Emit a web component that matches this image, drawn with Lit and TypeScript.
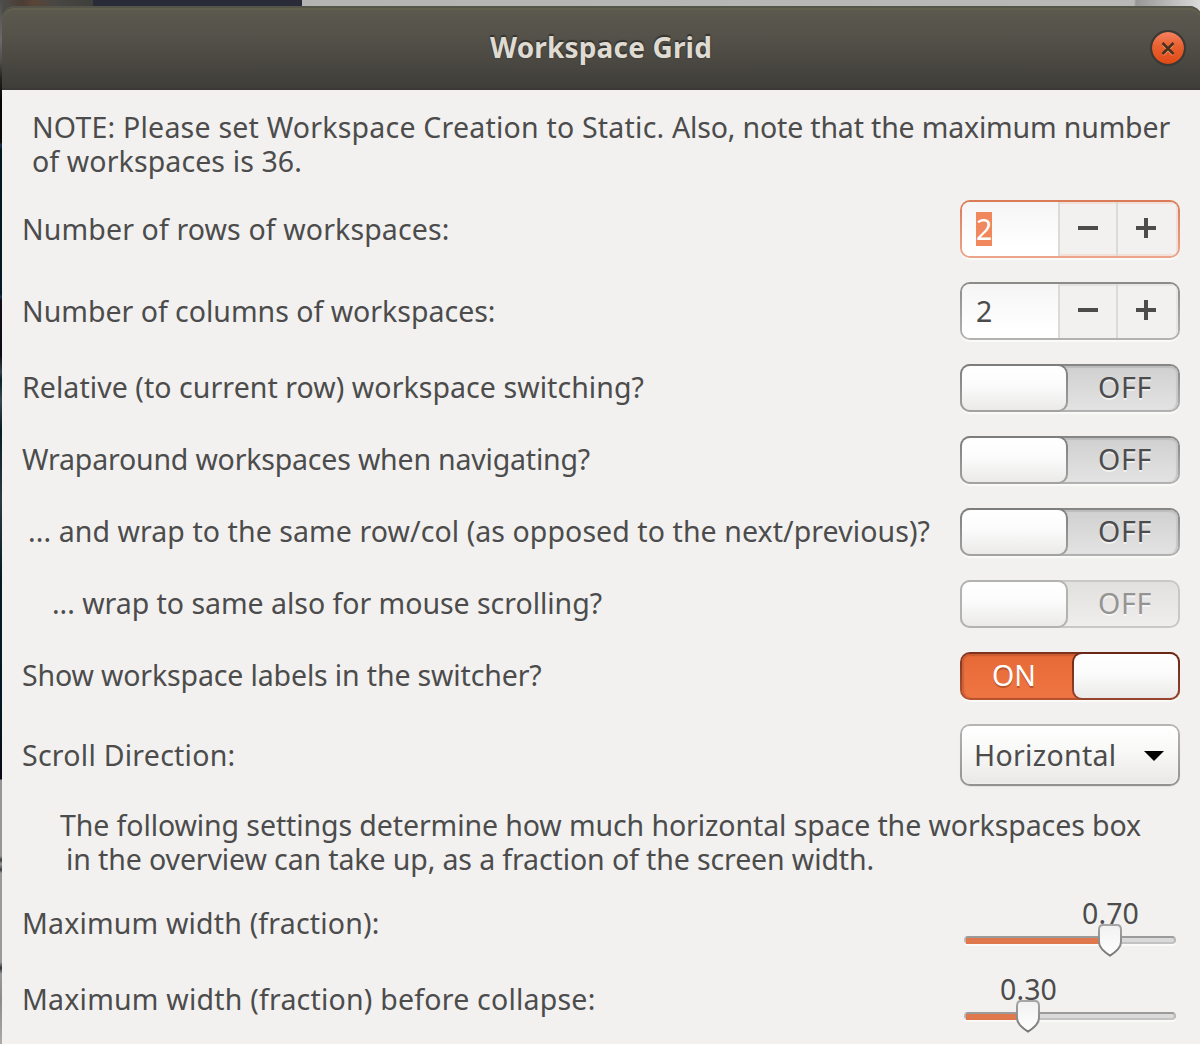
import { LitElement, html, css } from "lit";
import { customElement, property } from "lit/decorators.js";

/** One line of text whose tracking is adjusted so that it spans a given width. */
@customElement("fit-text")
class FitText extends LitElement {
  @property({ type: Number }) span = 0;
  @property() text = "";
  static styles = css`
    :host { display: block; white-space: pre; flex: none; }
    .t { display: inline-block; }
  `;
  render() {
    return html`<span class="t">${this.text}</span>`;
  }
  updated() {
    const el = this.renderRoot.querySelector(".t") as HTMLElement;
    el.style.letterSpacing = "0px";
    const natural = el.getBoundingClientRect().width;
    const n = this.text.length;
    if (this.span && n > 1) el.style.letterSpacing = `${(this.span - natural) / n}px`;
  }
}

@customElement("spin-box")
class SpinBox extends LitElement {
  @property() value = "";
  @property({ type: Boolean }) active = false;
  static styles = css`
    :host { display: block; }
    .frame {
      box-sizing: border-box; width: 220px; height: 58px; padding: 2px;
      border-radius: 10px; background: linear-gradient(#8a8a89, #b3b3b2);
      box-shadow: 0 2px 1px #fafaf9;
    }
    .frame.active { background: linear-gradient(#d97b56, #eca48b); }
    .inner { display: flex; height: 54px; border-radius: 8px; overflow: hidden; background: #f2f1f0; }
    .entry {
      width: 96px; box-sizing: border-box; padding-left: 14px; display: flex; align-items: center;
      background: linear-gradient(#f5f5f5, #fff 85%);
    }
    .val { display: block; width: 16px; height: 34px; line-height: 35px; text-align: center; color: #4c4c4c; font-size: 28.5px; }
    .active .val { background: #f0875d; color: #fff; }
    .btn {
      width: 56px; border-left: 2px solid #dadad9; display: flex; align-items: center; justify-content: center;
      box-shadow: inset 0 2px 0 #e4e3e2;
    }
    .btn:last-child { width: 62px; padding-right: 4px; box-sizing: border-box; box-shadow: inset -2px 2px 0 #e7e6e5; }
    .active .btn { box-shadow: inset 0 2px 0 #f2dfd8, inset 0 -2px 0 #f2dfd8; }
    .active .btn:last-child { box-shadow: inset -2px 2px 0 #f2dfd8, inset 0 -2px 0 #f2dfd8; }
    svg { display: block; margin-bottom: 2px; }
  `;
  render() {
    return html`<div class="frame ${this.active ? "active" : ""}">
      <div class="inner">
        <div class="entry"><span class="val">${this.value}</span></div>
        <div class="btn"><svg width="20" height="20"><path d="M0 8h20v4H0z" fill="#4c4c4c" /></svg></div>
        <div class="btn"><svg width="20" height="20"><path d="M0 8h8V0h4v8h8v4h-8v8H8v-8H0z" fill="#4c4c4c" /></svg></div>
      </div>
    </div>`;
  }
}

@customElement("toggle-switch")
class ToggleSwitch extends LitElement {
  @property({ type: Boolean }) on = false;
  @property({ type: Boolean }) disabled = false;
  static styles = css`
    :host { display: block; }
    .frame {
      box-sizing: border-box; width: 220px; height: 48px; border-radius: 10px; padding: 2px;
      background: linear-gradient(#858585, #b2b2b2); display: flex; position: relative;
      box-shadow: 0 2px 1px #fafaf9;
    }
    .trough {
      flex: 1; border-radius: 8px; background: linear-gradient(#d0d0d0, #e3e3e3);
      box-shadow: inset 0 2px 1px #bcbcbc, inset -2px 0 1px #c8c8c8;
      display: flex; align-items: center; justify-content: flex-end; color: #4c4c4c;
      text-shadow: 0 2px 0 rgba(255, 255, 255, 0.6);
    }
    .label { line-height: 42px; padding: 0 26px 2px 0; }
    .knob {
      position: absolute; left: 0; top: 0; box-sizing: border-box; width: 108px; height: 48px;
      border-radius: 10px; padding: 2px; background: linear-gradient(#7d7d7d, #a2a2a2);
    }
    .face { height: 44px; border-radius: 8px; background: linear-gradient(#fff, #fbfbfb 45%, #ebeae9); }
    .disabled { background: #c9c8c7; box-shadow: none; }
    .disabled .trough { background: linear-gradient(#e1e0df, #efeeed); box-shadow: none; color: #969491; }
    .disabled .knob { background: #b2b2b1; }
    .on { background: linear-gradient(#7d321c, #b8532f); }
    .on .trough {
      background: linear-gradient(#e66a38, #ef7543); box-shadow: inset 0 2px 1px #cc5b31, inset 2px 0 1px #cc6239;
      justify-content: flex-start; color: #fff; text-shadow: 0 2px 0 rgba(130, 50, 20, 0.45);
    }
    .on .label { padding: 0 0 2px 30px; }
    .on .knob { left: auto; right: 0; background: linear-gradient(#692715, #96452e); }
  `;
  render() {
    return html`<div class="frame ${this.on ? "on" : ""} ${this.disabled ? "disabled" : ""}">
      <div class="trough">
        <fit-text class="label" .text=${this.on ? "ON" : "OFF"} .span=${this.on ? 44 : 54}></fit-text>
      </div>
      <div class="knob"><div class="face"></div></div>
    </div>`;
  }
}

@customElement("combo-box")
class ComboBox extends LitElement {
  @property() value = "";
  static styles = css`
    :host { display: block; }
    .frame {
      box-sizing: border-box; width: 220px; height: 62px; border-radius: 10px; padding: 2px;
      background: linear-gradient(#b6b5b4, #929190); box-shadow: 0 1px 1px #e2e1e0;
    }
    .face {
      height: 58px; border-radius: 8px; box-sizing: border-box; padding: 0 14px 0 12px;
      display: flex; align-items: center; justify-content: space-between;
      background: linear-gradient(#fff, #f8f8f7 45%, #e9e8e7); color: #4c4c4c;
      box-shadow: inset 0 0 2px #fff;
    }
    svg { display: block; margin-top: 1px; }
  `;
  render() {
    return html`<div class="frame"><div class="face">
      <fit-text .text=${this.value} .span=${142.5}></fit-text>
      <svg width="20" height="10"><path d="M0 0h20L10 10z" fill="#000" /></svg>
    </div></div>`;
  }
}

@customElement("value-scale")
class ValueScale extends LitElement {
  @property({ type: Number }) value = 0;
  static styles = css`
    :host { display: block; }
    .scale { position: relative; width: 220px; height: 52px; padding: 39px 4px 0; box-sizing: border-box; }
    .trough {
      height: 8px; box-sizing: border-box; border-radius: 4px; border: 2px solid #b7b7b7;
      border-top-color: #9b9b9b; border-bottom-color: #c2c2c2; background: #dadada; box-shadow: 0 2px 0 #fafaf9;
    }
    .fill { height: 6px; background: #e0784e; }
    .over { position: absolute; width: 60px; margin-left: -30px; top: 0; display: flex; flex-direction: column; align-items: center; }
    .num { line-height: 32px; height: 27px; padding-left: 1px; color: #4c4c4c; }
    svg { display: block; }
  `;
  render() {
    const x = 2.5 + 205 * this.value;
    return html`<div class="scale">
      <div class="trough"><div class="fill" style="width:${x - 2}px"></div></div>
      <div class="over" style="left:${x + 4}px">
        <fit-text class="num" .text=${this.value.toFixed(2)} .span=${57}></fit-text>
        <svg width="26" height="33" viewBox="0 0 26 34" preserveAspectRatio="none">
          <defs>
            <linearGradient id="s" x2="0" y2="1"><stop stop-color="#a6a6a6" /><stop offset="1" stop-color="#777" /></linearGradient>
            <linearGradient id="f" x2="0" y2="1"><stop stop-color="#f1f1f1" /><stop offset="1" stop-color="#fff" /></linearGradient>
          </defs>
          <path d="M6 1h14q4 0 4 5v12.500q0 4-3 7.500-3.500 4-8 6.500-4.500-2.500-8-6.500-3-3.500-3-7.500V6q0-5 4-5z" fill="url(#f)" stroke="url(#s)" stroke-width="2" />
        </svg>
      </div>
    </div>`;
  }
}

@customElement("app-root")
class AppRoot extends LitElement {
  static styles = css`
    :host {
      display: block; width: 1200px; height: 1044px; overflow: hidden; box-sizing: border-box;
      padding: 6px 0 0 2px; color: #4c4c4c;
      font: 28.5px/34px "Noto Sans", "Open Sans", sans-serif;
      background:
        linear-gradient(90deg, #4c4c4a 0, #4b3d33 20px, #5a4537 32px, #494743 52px, #3f3f3c 91px, #292c38 91px,
          #292c38 300px, #b4b4b3 300px, #b9b9b8 1132px, #979797 1134px, #dcdcdc 1200px) 2px 0 / 1200px 24px no-repeat,
        linear-gradient(#4c4c4a 0, #6a6a68 40px, #4c4c4a 62px, #24241f 78px, #050503 100px, #0a0a08 142px,
          #1d3455 145px, #02151f 150px, #031b27 294px, #1d3455 297px, #140c18 300px, #0c0a12 355px,
          #35434c 372px, #0a2028 380px, #3a4850 400px, #081c24 430px, #2b3a42 500px, #061a24 580px,
          #021a26 700px, #0a0814 779px, #969696 780px, #969696 856px, #3c4043 860px, #969696 864px, #3c4043 870px,
          #999 873px, #999 962px, #2d3338 968px, #999 974px, #8c8c8c 1000px, #aaa 1044px) 0 0 / 2px 1044px no-repeat,
        #555;
    }
    .window { width: 1200px; }
    header {
      height: 84px; box-sizing: border-box; border-radius: 13px 13px 0 0; padding: 0 16px 0 0;
      background: linear-gradient(#5c594f, #55524a 35%, #3e3d38);
      box-shadow: inset 0 2px 0 #55544a, inset 0 4px 0 #62604f, inset 0 -2px 0 #3b3835;
      display: grid; grid-template-columns: 1fr auto 1fr; align-items: center;
    }
    .title {
      grid-column: 2; font-weight: 700; font-size: 28px; color: #dfdbd2; margin-left: 14px; padding-bottom: 2px;
      text-shadow: 0 -2px 1px #35342f, 0 0 2px #35342f;
    }
    .close {
      justify-self: end; box-sizing: border-box; width: 36px; height: 36px; border-radius: 50%;
      border: 2px solid #3a3935; background: linear-gradient(#f4815f, #e9602f 45%, #df4a16) padding-box;
      display: flex; align-items: center; justify-content: center;
    }
    main {
      box-sizing: border-box; height: 954px; padding: 20px 22px 0 20px; background: #f2f1f0;
      display: flex; flex-direction: column;
    }
    .note { padding-left: 10px; height: 90px; flex: none; }
    .pair { display: flex; }
    .info { padding: 22px 0 21px 38px; flex: none; }
    .info .second { padding-left: 6px; }
    .row { display: flex; align-items: center; justify-content: space-between; flex: none; margin-bottom: 24px; }
    .row.switch > fit-text { padding-bottom: 2px; }
    .row.combo { margin-bottom: 0; }
    .indent { padding-left: 6px; }
    .indent2 { padding-left: 30px; }
  `;
  render() {
    const line = (text: string, span: number, cls = "") =>
      html`<fit-text class=${cls} .text=${text} .span=${span}></fit-text>`;
    return html`<div class="window">
      <header>
        ${line("Workspace Grid", 222, "title")}
        <div class="close">
          <svg width="14" height="16" viewBox="0 0 14 16">
            <path d="M2 5l10 10M12 5L2 15" stroke="#f59a78" stroke-width="2" />
            <path d="M1.500 3l11 11M12.500 3l-11 11" stroke="#45321c" stroke-width="2.500" />
          </svg>
        </div>
      </header>
      <main>
        <div class="note">
          <div class="pair">
            ${line("NOTE: Please set Workspace Creation to Static. ", 640)}
            ${line("Also, note that the maximum number", 498)}
          </div>
          ${line("of workspaces is 36.", 270)}
        </div>
        <div class="row">${line("Number of rows of workspaces:", 427.5)}<spin-box value="2" active></spin-box></div>
        <div class="row">${line("Number of columns of workspaces:", 473.5)}<spin-box value="2"></spin-box></div>
        <div class="row switch">${line("Relative (to current row) workspace switching?", 622)}<toggle-switch></toggle-switch></div>
        <div class="row switch">${line("Wraparound workspaces when navigating?", 568)}<toggle-switch></toggle-switch></div>
        <div class="row switch">${line("... and wrap to the same row/col (as opposed to the next/previous)?", 902, "indent")}<toggle-switch></toggle-switch></div>
        <div class="row switch">${line("... wrap to same also for mouse scrolling?", 550, "indent2")}<toggle-switch disabled></toggle-switch></div>
        <div class="row switch">${line("Show workspace labels in the switcher?", 519.5)}<toggle-switch on></toggle-switch></div>
        <div class="row combo">${line("Scroll Direction:", 213.5)}<combo-box value="Horizontal"></combo-box></div>
        <div class="info">
          ${line("The following settings determine how much horizontal space the workspaces box", 1081)}
          ${line("in the overview can take up, as a fraction of the screen width.", 808, "second")}
        </div>
        <div class="row">${line("Maximum width (fraction):", 357.5)}<value-scale .value=${0.7}></value-scale></div>
        <div class="row">${line("Maximum width (fraction) before collapse:", 573.5)}<value-scale .value=${0.3}></value-scale></div>
      </main>
    </div>`;
  }
}
